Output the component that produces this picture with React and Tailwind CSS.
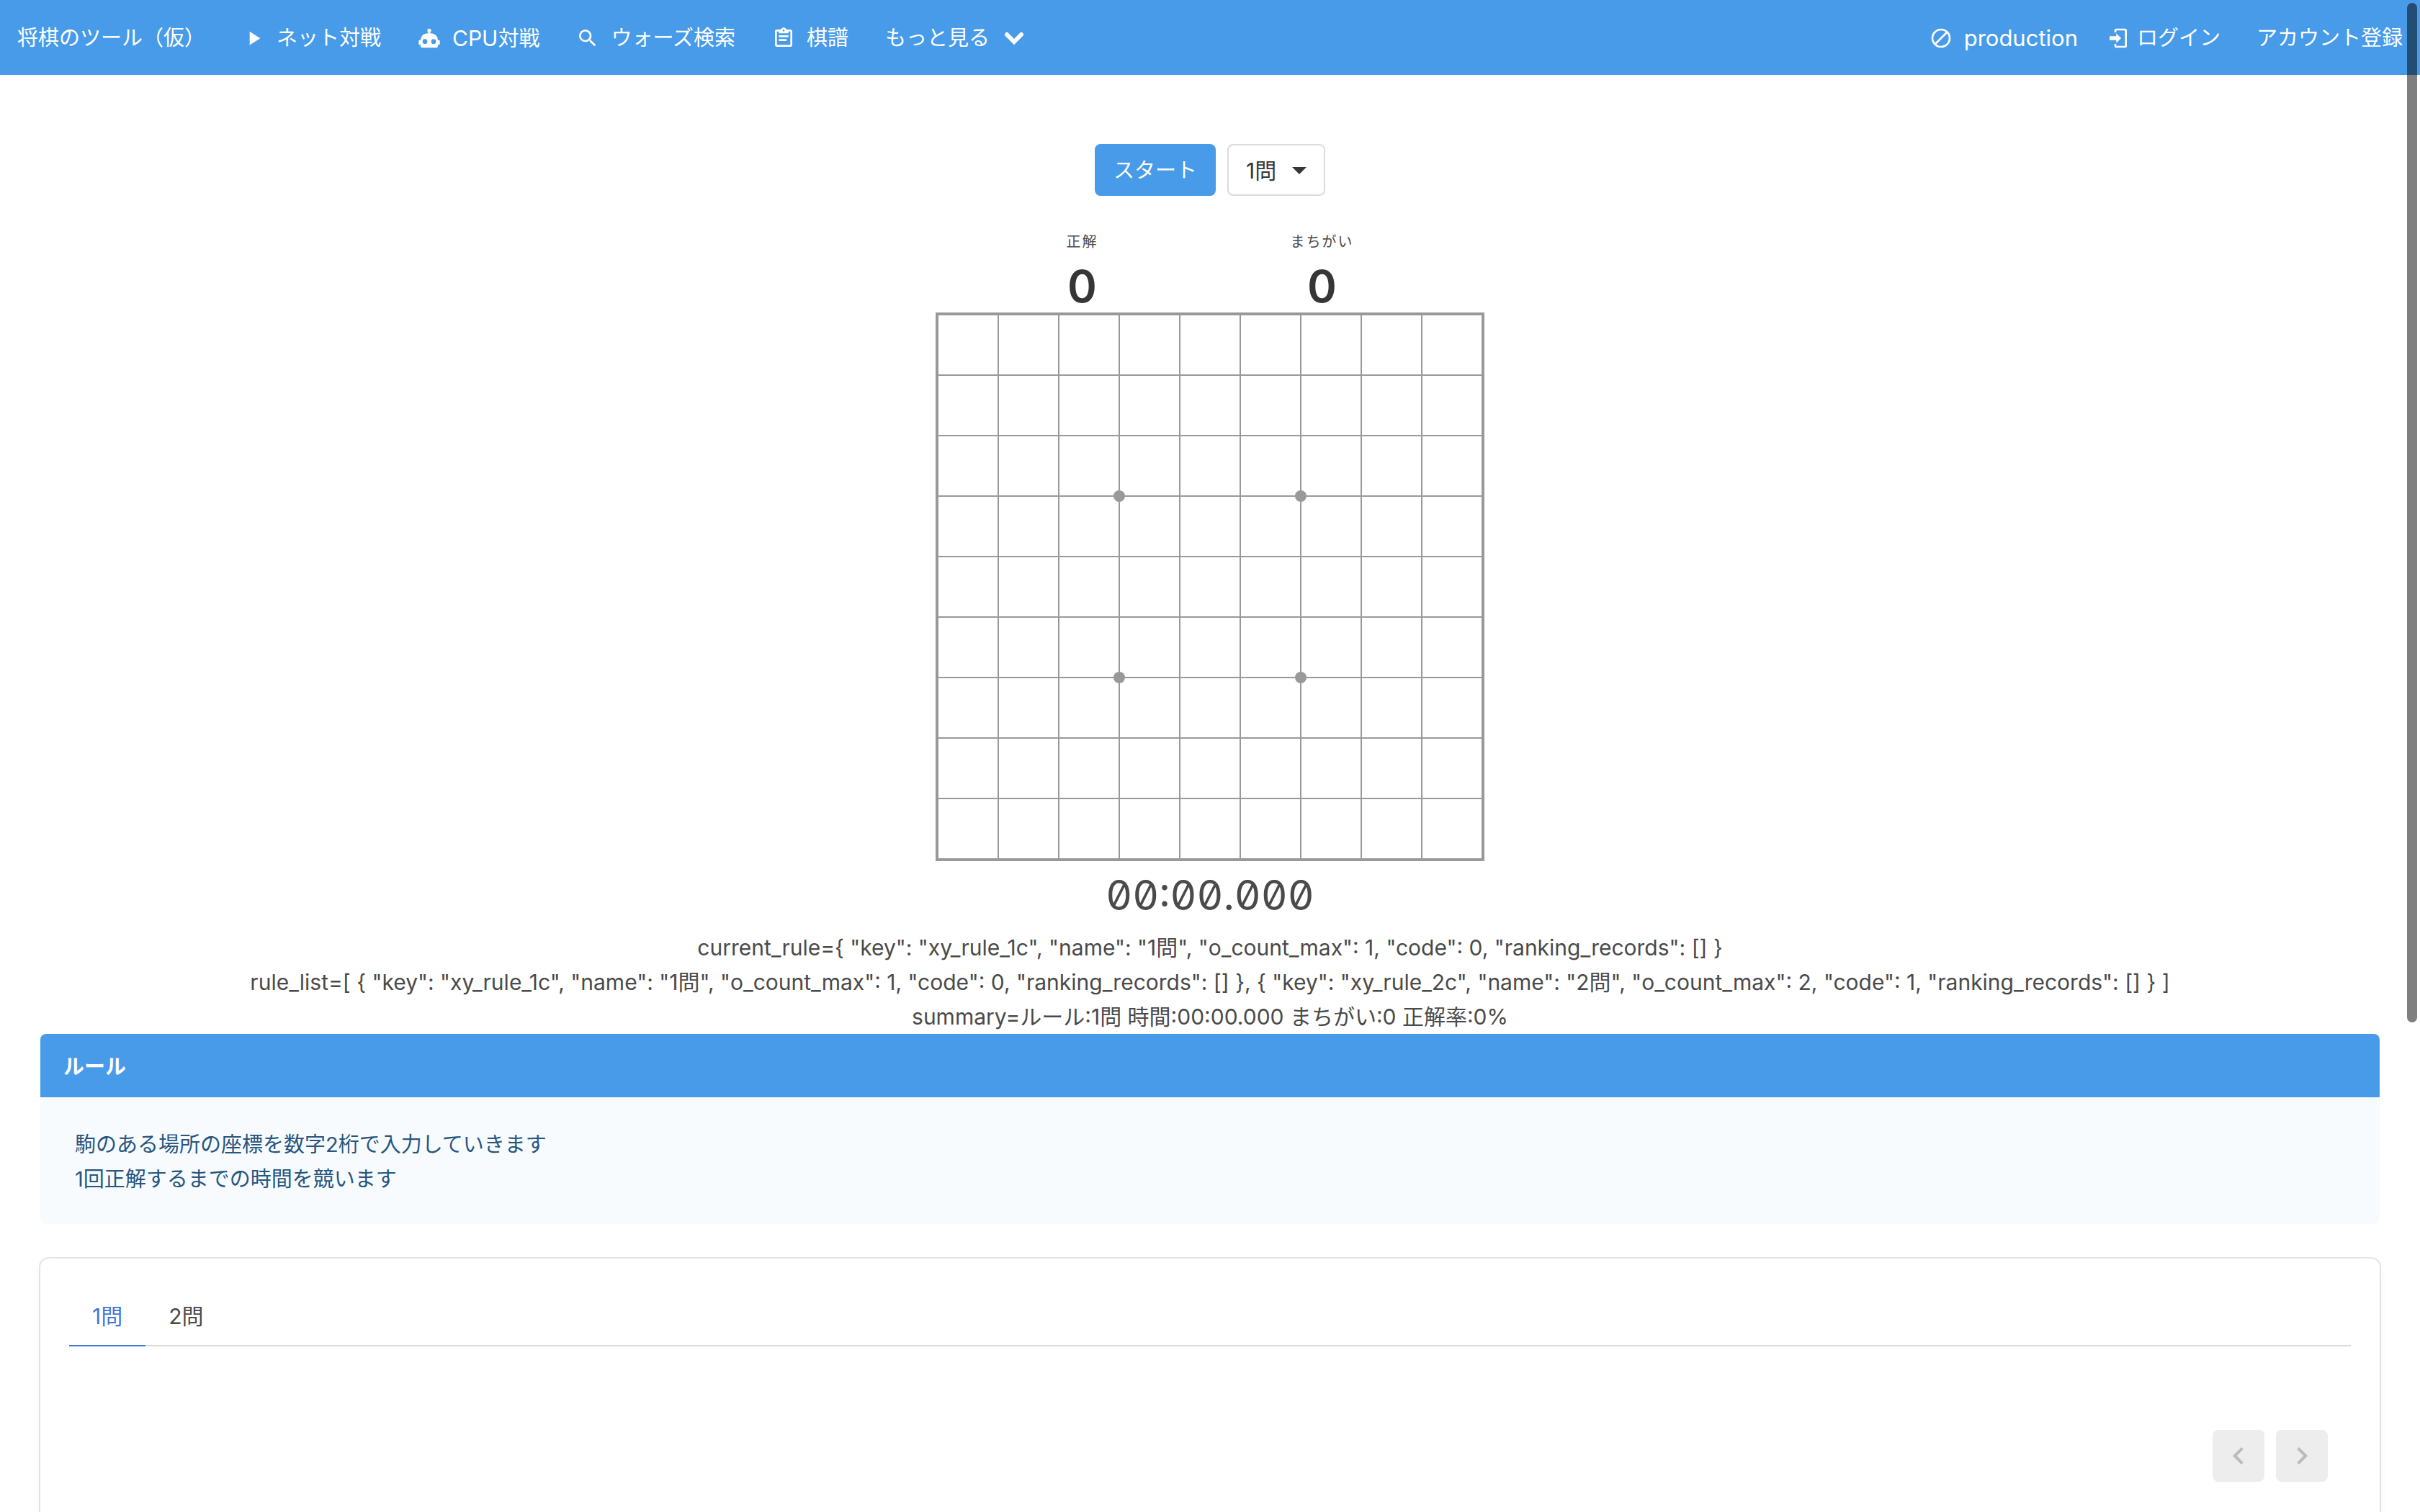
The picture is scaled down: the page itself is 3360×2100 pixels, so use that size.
import React, { useState } from "react";

const icons = {
  play: "M8,5.14V19.14L19,12.14L8,5.14Z",
  robot:
    "M12,2A2,2 0 0,1 14,4C14,4.74 13.6,5.39 13,5.73V7H14A7,7 0 0,1 21,14H22A1,1 0 0,1 23,15V18A1,1 0 0,1 22,19H21V20A2,2 0 0,1 19,22H5A2,2 0 0,1 3,20V19H2A1,1 0 0,1 1,18V15A1,1 0 0,1 2,14H3A7,7 0 0,1 10,7H11V5.73C10.4,5.39 10,4.74 10,4A2,2 0 0,1 12,2M7.5,13A2.5,2.5 0 0,0 5,15.5A2.5,2.5 0 0,0 7.5,18A2.5,2.5 0 0,0 10,15.5A2.5,2.5 0 0,0 7.5,13M16.5,13A2.5,2.5 0 0,0 14,15.5A2.5,2.5 0 0,0 16.5,18A2.5,2.5 0 0,0 19,15.5A2.5,2.5 0 0,0 16.5,13Z",
  search:
    "M9.5,3A6.5,6.5 0 0,1 16,9.5C16,11.11 15.41,12.59 14.44,13.73L14.71,14H15.5L20.5,19L19,20.5L14,15.5V14.71L13.73,14.44C12.59,15.41 11.11,16 9.5,16A6.5,6.5 0 0,1 3,9.5A6.5,6.5 0 0,1 9.5,3M9.5,5C7,5 5,7 5,9.5C5,12 7,14 9.5,14C12,14 14,12 14,9.5C14,7 12,5 9.5,5Z",
  clipboard:
    "M19,3H14.82C14.25,1.44 12.53,0.64 11,1.2C10.14,1.5 9.5,2.16 9.18,3H5A2,2 0 0,0 3,5V19A2,2 0 0,0 5,21H19A2,2 0 0,0 21,19V5A2,2 0 0,0 19,3M12,3A1,1 0 0,1 13,4A1,1 0 0,1 12,5A1,1 0 0,1 11,4A1,1 0 0,1 12,3M7,7H17V5H19V19H5V5H7V7M17,11H7V9H17V11M15,15H7V13H15V15Z",
  cancel:
    "M12,2A10,10 0 1,1 2,12A10,10 0 0,1 12,2M12,4A8,8 0 0,0 4,12C4,13.85 4.63,15.55 5.68,16.91L16.91,5.68C15.55,4.63 13.85,4 12,4M12,20A8,8 0 0,0 20,12C20,10.15 19.37,8.45 18.32,7.09L7.09,18.32C8.45,19.37 10.15,20 12,20Z",
  login:
    "M10,17V14H3V10H10V7L15,12L10,17M10,2H19A2,2 0 0,1 21,4V20A2,2 0 0,1 19,22H10A2,2 0 0,1 8,20V18H10V20H19V4H10V6H8V4A2,2 0 0,1 10,2Z",
  left: "M15.41,16.58L10.83,12L15.41,7.41L14,6L8,12L14,18L15.41,16.58Z",
  right: "M8.59,16.58L13.17,12L8.59,7.41L10,6L16,12L10,18L8.59,16.58Z",
  caret: "M7,10L12,15L17,10H7Z",
};

function Icon({ name, className = "size-8" }) {
  return (
    <svg viewBox="0 0 24 24" fill="currentColor" aria-hidden="true" className={`shrink-0 ${className}`}>
      <path d={icons[name]} />
    </svg>
  );
}

function NavLink({ icon, children, className = "gap-4" }) {
  return (
    <a href="#" className={`flex items-center px-6 whitespace-nowrap ${className}`}>
      {icon && <Icon name={icon} />}
      <span>{children}</span>
    </a>
  );
}

function Navbar() {
  return (
    <nav className="flex h-26 items-stretch justify-between bg-[#489be8] pt-0.5 text-[29px] text-white">
      <div className="flex gap-[3px]">
        <NavLink>将棋のツール（仮）</NavLink>
        <NavLink icon="play">ネット対戦</NavLink>
        <NavLink icon="robot"><span className="text-[30px]">CPU</span>対戦</NavLink>
        <NavLink icon="search">ウォーズ検索</NavLink>
        <NavLink icon="clipboard">棋譜</NavLink>
        <button type="button" className="flex items-center gap-5 px-6 whitespace-nowrap">
          もっと見る
          <svg viewBox="0 0 28 18" fill="none" stroke="currentColor" strokeWidth="6" strokeLinecap="round" aria-hidden="true" className="h-[18px] w-7">
            <path d="M4 4L14 14L24 4" />
          </svg>
        </button>
      </div>
      <div className="flex gap-0.5">
        <NavLink icon="cancel"><span className="text-[31px]">production</span></NavLink>
        <NavLink icon="login" className="-ml-2.5 gap-2.5">ログイン</NavLink>
        <NavLink>アカウント登録</NavLink>
      </div>
    </nav>
  );
}

function Score({ label, value }) {
  return (
    <div className="flex grow flex-col items-center">
      <p className="text-[20px] leading-8 tracking-[2px]">{label}</p>
      <p className="mt-2.5 text-[62px] leading-[72px] font-semibold text-[#363636]">{value}</p>
    </div>
  );
}

const STARS = [20, 23, 47, 50];

function Board() {
  return (
    <div className="grid w-[762px] grid-cols-9 border-3 border-[#999]">
      {Array.from({ length: 81 }, (_, i) => (
        <div key={i} className="relative aspect-square border border-[#999]">
          {STARS.includes(i) && (
            <span className="absolute -right-[9px] -bottom-[9px] z-10 size-4 rounded-full bg-[#999]" />
          )}
        </div>
      ))}
    </div>
  );
}

function Tab({ active, onClick, children }) {
  return (
    <button
      type="button"
      role="tab"
      aria-selected={active}
      onClick={onClick}
      className={`-mb-0.5 border-b-2 px-8 py-4 leading-12 ${active ? "border-[#4275d8] text-[#4275d8]" : "border-transparent"}`}
    >
      {children}
    </button>
  );
}

export default function App() {
  const [tab, setTab] = useState(0);
  return (
    <div className="relative h-screen overflow-hidden bg-white font-['Inter','Noto_Sans_CJK_JP',sans-serif] text-[#4a4a4a]">
      <Navbar />
      <main className="flex flex-col px-14 pt-24">
        <div className="flex flex-col items-center">
          <div className="flex gap-4">
            <button type="button" className="h-18 rounded-lg bg-[#489be8] px-[26px] pt-0.5 text-[29px] text-white">スタート</button>
            <div className="relative flex items-center text-[30px] text-[#363636]">
              <select aria-label="ルール" className="h-18 w-34 appearance-none rounded-lg border-2 border-[#dbdbdb] bg-white pt-0.5 pl-6">
                <option>1問</option>
                <option>2問</option>
              </select>
              <Icon name="caret" className="pointer-events-none absolute right-3 size-12" />
            </div>
          </div>
          <div className="mt-12 flex w-[642px] gap-6">
            <Score label="正解" value="0" />
            <Score label="まちがい" value="0" />
          </div>
          <Board />
          <p className="text-[57px] leading-24 slashed-zero tabular-nums">00:00.000</p>
          <div className="text-center text-[30px] leading-12">
            <p>{'current_rule={ "key": "xy_rule_1c", "name": "1問", "o_count_max": 1, "code": 0, "ranking_records": [] }'}</p>
            <p>{'rule_list=[ { "key": "xy_rule_1c", "name": "1問", "o_count_max": 1, "code": 0, "ranking_records": [] }, { "key": "xy_rule_2c", "name": "2問", "o_count_max": 2, "code": 1, "ranking_records": [] } ]'}</p>
            <p>summary=ルール:1問 時間:00:00.000 まちがい:0 正解率:0%</p>
          </div>
        </div>

        <article className="overflow-hidden rounded-lg bg-[#f7fbfe] text-[29px]">
          <h2 className="bg-[#489be8] px-8 pt-[22px] pb-[18px] leading-12 font-bold text-white">ルール</h2>
          <div className="px-12 pt-[42px] pb-[38px] leading-12 text-[#26557f]">
            <p>駒のある場所の座標を数字2桁で入力していきます</p>
            <p>1回正解するまでの時間を競います</p>
          </div>
        </article>

        <section className="mt-12 rounded-xl p-10 text-[30px] shadow-[0_8px_16px_-2px_rgba(10,10,10,0.06),0_0_0_2px_rgba(10,10,10,0.1)]">
          <div role="tablist" className="flex border-b-2 border-[#dbdbdb]">
            <Tab active={tab === 0} onClick={() => setTab(0)}>1問</Tab>
            <Tab active={tab === 1} onClick={() => setTab(1)}>2問</Tab>
          </div>
          <div className="flex min-h-96 items-start justify-end gap-4 px-8 pt-29">
            <button type="button" disabled aria-label="前のページ" className="flex size-18 items-center justify-center rounded-lg bg-[#ededed] text-[#bababa]">
              <Icon name="left" className="size-12" />
            </button>
            <button type="button" disabled aria-label="次のページ" className="flex size-18 items-center justify-center rounded-lg bg-[#ededed] text-[#bababa]">
              <Icon name="right" className="size-12" />
            </button>
          </div>
        </section>
      </main>
      <div className="absolute top-1 right-1 h-[1416px] w-3.5 rounded-full bg-black/50" />
    </div>
  );
}
